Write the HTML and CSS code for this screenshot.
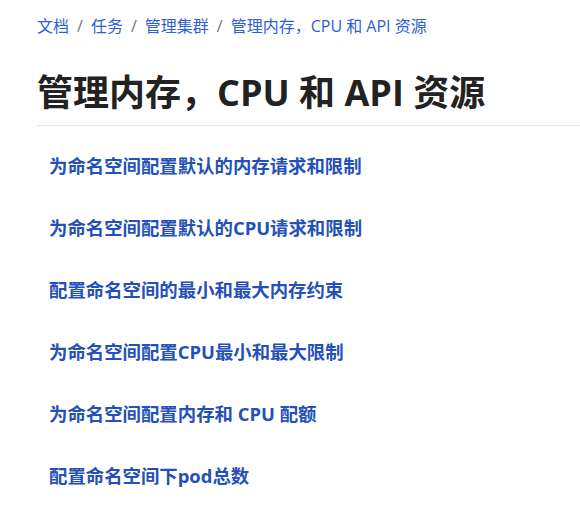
FILE: index.html
```html
<!DOCTYPE html>
<html lang="zh">
<head>
<meta charset="utf-8">
<title>管理内存，CPU 和 API 资源</title>
<link rel="stylesheet" href="styles.css">
</head>
<body>
<main class="page">
  <nav class="breadcrumb">
    <a href="#">文档</a><span class="sep">/</span>
    <a href="#">任务</a><span class="sep">/</span>
    <a href="#">管理集群</a><span class="sep">/</span>
    <a href="#">管理内存，CPU 和 API 资源</a>
  </nav>
  <h1 class="title">管理内存，CPU 和 API 资源</h1>
  <hr class="rule">
  <div class="entries">
    <div class="entry"><a href="#">为命名空间配置默认的内存请求和限制</a></div>
    <div class="entry"><a href="#">为命名空间配置默认的CPU请求和限制</a></div>
    <div class="entry"><a href="#">配置命名空间的最小和最大内存约束</a></div>
    <div class="entry"><a href="#">为命名空间配置CPU最小和最大限制</a></div>
    <div class="entry"><a href="#">为命名空间配置内存和 CPU 配额</a></div>
    <div class="entry"><a href="#">配置命名空间下pod总数</a></div>
  </div>
</main>
</body>
</html>
```

FILE: styles.css
```css
html, body {
  margin: 0;
  padding: 0;
  background: #ffffff;
}
body {
  font-family: "Open Sans", "Noto Sans CJK SC", sans-serif;
  color: #222222;
}
a {
  text-decoration: none;
}
.page {
  padding-left: 37px;
  padding-top: 14px;
}
.breadcrumb {
  font-size: 16px;
  line-height: 24px;
  height: 24px;
  display: flex;
  align-items: center;
  white-space: nowrap;
}
.breadcrumb a {
  color: #2e5fd4;
}
.breadcrumb .sep {
  color: #6c757d;
  padding: 0 8px;
}
.title {
  margin: 33px 0 0 0;
  font-size: 36px;
  line-height: 43px;
  font-weight: 700;
  color: #222222;
  white-space: nowrap;
}
.rule {
  margin: 11px 0 0 0;
  border: 0;
  border-top: 1px solid #e6e6e6;
  height: 0;
}
.entries {
  margin-top: 8px;
  padding-left: 12px;
}
.entry {
  height: 62px;
  display: flex;
  align-items: center;
}
.entry a {
  font-size: 18.4px;
  font-weight: 700;
  color: #2450b8;
  white-space: nowrap;
}
```
